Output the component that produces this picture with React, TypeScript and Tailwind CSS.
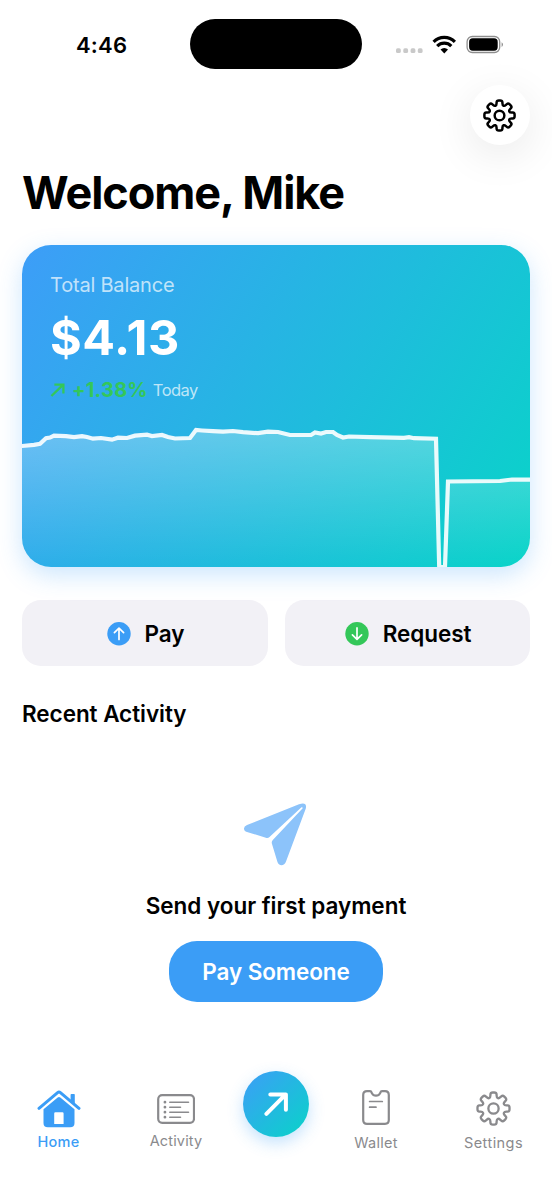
import React from 'react';

type Point = [number, number];

/** Builds a closed path through the points with every corner rounded off. */
function roundedPath(points: Point[], ratio: number): string {
  const n = points.length;
  let d = '';
  for (let i = 0; i < n; i++) {
    const p = points[i];
    const a = points[(i + n - 1) % n];
    const b = points[(i + 1) % n];
    const s: Point = [p[0] + (a[0] - p[0]) * ratio, p[1] + (a[1] - p[1]) * ratio];
    const e: Point = [p[0] + (b[0] - p[0]) * ratio, p[1] + (b[1] - p[1]) * ratio];
    d += `${i === 0 ? 'M' : 'L'}${s[0].toFixed(2)} ${s[1].toFixed(2)}Q${p[0].toFixed(2)} ${p[1].toFixed(2)} ${e[0].toFixed(2)} ${e[1].toFixed(2)}`;
  }
  return d + 'Z';
}

const gearPoints: Point[] = [];
for (let tooth = 0; tooth < 8; tooth++) {
  const shape: Point[] = [
    [10.4, -16.5],
    [14.9, -10.5],
    [14.9, 10.5],
    [10.4, 16.5],
  ];
  for (const [r, offset] of shape) {
    const angle = ((tooth * 45 + offset) * Math.PI) / 180;
    gearPoints.push([16 + r * Math.cos(angle), 16 + r * Math.sin(angle)]);
  }
}
const gearPath = roundedPath(gearPoints, 0.38);

function Gear({ className, stroke }: { className: string; stroke: number }) {
  return (
    <svg viewBox="0 0 32 32" className={className} fill="none" stroke="currentColor" strokeWidth={stroke}>
      <path d={gearPath} />
      <circle cx="16" cy="16" r="4.7" />
    </svg>
  );
}

const history: Point[] = [
  [-2, 201], [0, 201], [12, 199.8], [18, 198.8], [24, 193.3], [28, 192.6], [32, 190.6], [44, 191.2], [52, 192.2],
  [60, 191.2], [65, 192], [71, 193.7], [79, 193], [90, 194.7], [96, 192.7], [105, 193], [113, 190.7],
  [125, 189.7], [130, 191], [140, 189.9], [146, 192], [153, 193.5], [168, 193], [174, 185],
  [180, 185.5], [191, 186.2], [201, 186.7], [211, 186], [221, 187.2], [236, 188.2], [246, 186.7],
  [256, 187], [268, 190], [289, 190], [293, 187.5], [299, 188.5], [304, 187], [311, 187], [315, 190],
  [321, 192.5], [327, 191.5], [348, 192.2], [382, 192.9], [387, 192.2], [392, 193.2], [414, 193.7],
  [417.2, 322], [423, 322], [426, 236.5], [478, 236], [486, 235], [490, 234.5], [510, 234.7],
];
const line = 'M' + history.map((p) => p.join(' ')).join('L');

function Chart() {
  return (
    <svg viewBox="0 0 508 322" className="absolute inset-0 h-full w-full" fill="none">
      <defs>
        <linearGradient id="area" x1="0" y1="184" x2="0" y2="322" gradientUnits="userSpaceOnUse">
          <stop offset="0" stopColor="#fff" stopOpacity="0.28" />
          <stop offset="1" stopColor="#fff" stopOpacity="0" />
        </linearGradient>
      </defs>
      <path d={line + 'L510 322L-2 322Z'} fill="url(#area)" />
      <path d={line} stroke="#fff" strokeOpacity="0.9" strokeWidth="4.2" strokeLinejoin="miter" />
    </svg>
  );
}

function StatusBar() {
  return (
    <div className="flex h-[85px] items-start">
      <div className="mt-[30px] w-[190px] pl-[76px] text-[22px] leading-[30px] font-semibold tracking-[0.2px]">4:46</div>
      <div className="mt-[19px] h-[50px] w-[172px] rounded-full bg-black" />
      <div className="mt-[35px] ml-[33px] flex h-5 items-center">
        <svg viewBox="0 0 28 20" className="h-5 w-7" fill="#c9c9c9">
          <rect x="1" y="13.3" width="4.8" height="4.8" rx="1.6" />
          <rect x="8.3" y="13.3" width="4.8" height="4.8" rx="1.6" />
          <rect x="15.6" y="13.3" width="4.8" height="4.8" rx="1.6" />
          <rect x="22.8" y="13.3" width="4.8" height="4.8" rx="1.6" />
        </svg>
        <svg viewBox="0 0 24 20" className="ml-[9px] h-5 w-6" fill="none" stroke="#000">
          <path d="M1.6 6.9A15 15 0 0 1 22.9 6.9" strokeWidth="3.2" />
          <path d="M5.2 11.1A10 10 0 0 1 19.3 11.1" strokeWidth="3.2" />
          <path d="M8.5 14.6A5.4 5.4 0 0 1 16 14.6L12.25 18.4Z" fill="#000" stroke="none" />
        </svg>
        <svg viewBox="0 0 38 20" className="ml-[10px] h-5 w-[38px]">
          <rect x="1.1" y="1.5" width="32.6" height="16" rx="5.2" fill="none" stroke="#8e8e8e" strokeWidth="1.3" />
          <rect x="3.1" y="3.3" width="28.6" height="12.4" rx="3.6" fill="#000" />
          <path d="M35.6 7.2Q37 8 37 9.6T35.6 12Z" fill="#8e8e8e" />
        </svg>
      </div>
    </div>
  );
}

function BalanceCard() {
  return (
    <section className="relative mt-[25px] h-[322px] rounded-[29px] shadow-[0_8px_24px_rgba(59,158,248,0.26)]">
      <div className="absolute inset-0 overflow-hidden rounded-[29px] bg-[linear-gradient(122.4deg,#3d9df8,#08d4c8)]">
        <Chart />
      </div>
      <div className="relative flex flex-col pt-[24.5px] pl-7">
        <div className="text-[20px] leading-[30px] tracking-[-0.2px] text-white/70">Total Balance</div>
        <div className="mt-[8px] text-[48.5px] leading-[60px] font-bold tracking-[0.6px] text-white">$4.13</div>
        <div className="mt-[7.5px] flex h-[30px] items-center">
          <svg viewBox="0 0 16 16" className="h-4 w-4" fill="none" stroke="#34c759" strokeWidth="2.3">
            <path d="M1.4 14L13 2.8M4.4 2.6H13.4V11.6" />
          </svg>
          <span className="ml-1.5 text-[20px] leading-[30px] font-bold tracking-[0.2px] text-[#34c759]">+1.38%</span>
          <span className="ml-[5px] text-[16.5px] leading-[30px] tracking-[-0.55px] text-white/70">Today</span>
        </div>
      </div>
    </section>
  );
}

function ActionButton({ label, color, down }: { label: string; color: string; down?: boolean }) {
  return (
    <button className="flex h-[66px] flex-1 items-center justify-center gap-[13.5px] rounded-[19px] bg-[#f2f1f6] pt-px pl-[2px]">
      <svg viewBox="0 0 24 24" className="h-6 w-6" fill="none">
        <circle cx="12" cy="11.7" r="11.7" fill={color} />
        <path
          d={down ? 'M12 5.9V17.1M7.4 12.8L12 17.3L16.6 12.8' : 'M12 17.5V6.3M7.4 10.6L12 6.1L16.6 10.6'}
          stroke="#fff"
          strokeWidth="1.7"
          strokeLinecap="round"
          strokeLinejoin="round"
        />
      </svg>
      <span className="text-[22.5px] leading-[30px] font-semibold tracking-[-0.08px]">{label}</span>
    </button>
  );
}

function TabBar() {
  return (
    <nav className="mt-[69px] flex h-[129px] text-[14.5px] leading-5 text-[#8a8a8d]">
      <div className="flex w-[117px] flex-col items-center pt-[18.5px] text-[#3b9df6]">
        <svg viewBox="0 0 44 38" className="h-[38px] w-11" fill="none">
          <path d="M2 18.4L20.6 2.6Q22 1.4 23.4 2.6L42 18.4" stroke="currentColor" strokeWidth="3" strokeLinecap="round" />
          <path d="M33.6 4.8Q33.6 4 34.4 4H37Q37.8 4 37.8 4.8V14.5L33.6 11Z" fill="currentColor" />
          <path
            d="M6.5 19.3L20.7 7.4Q22 6.4 23.3 7.4L37.5 19.3V33Q37.5 37.3 33.2 37.3H10.8Q6.5 37.3 6.5 33ZM17.2 23.4V34H26.6V23.4Q26.6 22.2 25.4 22.2H18.4Q17.2 22.2 17.2 23.4Z"
            fill="currentColor"
            fillRule="evenodd"
          />
        </svg>
        <span className="mt-[4.5px] font-medium tracking-[0.3px]">Home</span>
      </div>
      <div className="flex w-[118px] flex-col items-center pt-[22.5px]">
        <svg viewBox="0 0 38 30" className="h-[30px] w-[38px]" fill="none" stroke="currentColor">
          <rect x="1.2" y="1.2" width="35.8" height="27.6" rx="4" strokeWidth="2.2" />
          <path d="M12.8 8.2H31.5M12.8 13.2H23.5M12.8 18.2H31.5M12.8 23.2H23.5" strokeWidth="1.6" strokeLinecap="round" />
          <path d="M7.9 8.2H8M7.9 13.2H8M7.9 18.2H8M7.9 23.2H8" strokeWidth="2.7" strokeLinecap="round" />
        </svg>
        <span className="mt-[7px] tracking-[0.15px]">Activity</span>
      </div>
      <div className="flex w-[82px] flex-col items-center">
        <div className="flex h-[66px] w-[66px] items-center justify-center rounded-full bg-[linear-gradient(135deg,#3d9df8,#08d4c8)] shadow-[0_6px_16px_rgba(59,158,248,0.3)]">
          <svg viewBox="0 0 24 24" className="h-6 w-6" fill="none" stroke="#fff" strokeWidth="4" strokeLinecap="round" strokeLinejoin="round">
            <path d="M2.4 21.8L21.5 2.7M6.3 2.4H21.9V17.7" />
          </svg>
        </div>
      </div>
      <div className="flex w-[118px] flex-col items-center pt-[19px]">
        <svg viewBox="0 0 28 35" className="h-[35px] w-7" fill="none" stroke="currentColor" strokeLinecap="round" strokeLinejoin="round">
          <path
            d="M5 1.2H8C9.6 1.2 9.4 2.2 10 3.4C11.4 6.4 16.6 6.4 18 3.4C18.6 2.2 18.4 1.2 20 1.2H23Q26.8 1.2 26.8 5V30Q26.8 33.8 23 33.8H5Q1.2 33.8 1.2 30V5Q1.2 1.2 5 1.2Z"
            strokeWidth="2.2"
          />
          <path d="M7.6 11.5H20.3M7.6 17.2H14" strokeWidth="1.7" />
        </svg>
        <span className="mt-[7.5px] tracking-[0.3px]">Wallet</span>
      </div>
      <div className="flex w-[117px] flex-col items-center pt-[19.5px]">
        <Gear className="h-[35px] w-[35px]" stroke={2.1} />
        <span className="mt-[7px] tracking-[0.45px]">Settings</span>
      </div>
    </nav>
  );
}

export default function App() {
  return (
    <div className="flex h-[1200px] w-[552px] flex-col overflow-hidden bg-white font-['Inter',sans-serif] whitespace-nowrap text-black">
      <StatusBar />
      <main className="flex flex-col px-[22px]">
        <button className="flex h-[60px] w-[60px] items-center justify-center self-end rounded-full bg-white pr-px shadow-[0_10px_44px_rgba(0,0,0,0.09)]">
          <Gear className="h-[33px] w-[33px]" stroke={2.4} />
        </button>
        <h1 className="mt-5 text-[45px] leading-[55px] font-bold tracking-[-1.05px]">Welcome, Mike</h1>
        <BalanceCard />
        <div className="mt-[33px] flex gap-[17px]">
          <ActionButton label="Pay" color="#3b9df6" />
          <ActionButton label="Request" color="#34c759" down />
        </div>
        <h2 className="mt-[33px] text-[22.5px] leading-[30px] font-semibold tracking-[-0.05px]">Recent Activity</h2>
        <div className="mt-[73px] flex flex-col items-center">
          <svg viewBox="0 0 64 64" className="mr-[3px] h-16 w-16" fill="#8cc3fa">
            <path d="M4 23L56 2.2Q64.3 -0.5 62.8 6.5L43 59.5Q41.5 63.3 38.5 63.3T34.3 59.5L29 42Q28.2 39.8 29.8 38L59.7 6.2Q59.8 5 58.5 5.3L26.5 35Q25 36.4 22.8 35.7L4 30Q1 29 1 26.5Q1 24.3 4 23Z" />
          </svg>
          <div className="mt-[25px] text-[22.5px] leading-[30px] font-semibold tracking-[-0.03px]">Send your first payment</div>
          <button className="mt-[20px] h-[61px] w-[214px] rounded-[28px] bg-[#3b9df6] text-[22.5px] leading-[30px] font-semibold tracking-[-0.1px] text-white">
            Pay Someone
          </button>
        </div>
      </main>
      <TabBar />
    </div>
  );
}
